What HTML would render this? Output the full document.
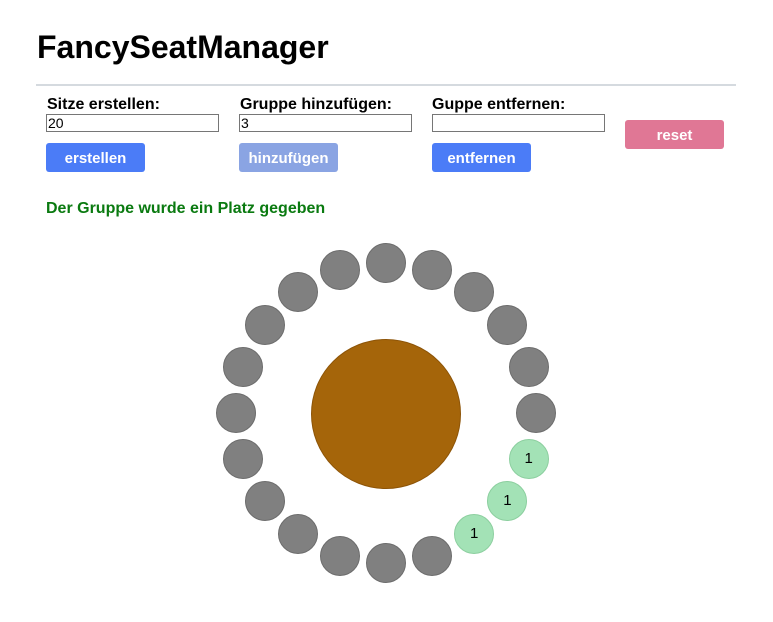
<!DOCTYPE html><html><head><style>
body{margin:0;width:773px;height:622px;background:#fff;font-family:"Liberation Sans",sans-serif;position:relative;overflow:hidden}
.a{position:absolute}
h1{position:absolute;left:37px;top:29px;margin:0;font-size:32px;font-weight:bold}
.hr{left:36px;top:84px;width:700px;height:2px;background:#d5dadf}
.l{font-size:16px;font-weight:bold;top:96px}
.in{top:114px;width:170px;height:16px;border:1px solid #767676;font-size:14px;line-height:16px;padding-left:1px}
.b{height:29px;width:99px;border-radius:3px;color:#fff;font-weight:bold;font-size:15px;text-align:center;line-height:31px}
.s{width:38px;height:38px;border-radius:50%;background:#808080;border:1px solid #6c6c6c;font-size:15px;text-align:center;line-height:38px}
.g{background:#a3e2b6;border-color:#8ccf9f}
</style></head><body>
<h1>FancySeatManager</h1>
<div class="a hr"></div>
<div class="a l" style="left:47px">Sitze erstellen:</div>
<div class="a l" style="left:240px">Gruppe hinzufügen:</div>
<div class="a l" style="left:432px">Guppe entfernen:</div>
<div class="a in" style="left:46px">20</div>
<div class="a in" style="left:239px">3</div>
<div class="a in" style="left:432px"></div>
<div class="a b" style="left:46px;top:143px;background:#4b7cf7">erstellen</div>
<div class="a b" style="left:239px;top:143px;background:#8aa4e3">hinzufügen</div>
<div class="a b" style="left:432px;top:143px;background:#4b7cf7">entfernen</div>
<div class="a b" style="left:625px;top:120px;background:#e07795">reset</div>
<div class="a" style="left:46px;top:200px;color:#0a7a10;font-weight:bold;font-size:16px">Der Gruppe wurde ein Platz gegeben</div>
<div class="a" style="left:311px;top:339px;width:148px;height:148px;border-radius:50%;background:#a5650a;border:1px solid #8d5407"></div>
<div id="r"></div>
<script>
var h='';for(var i=0;i<20;i++){var t=i*18*Math.PI/180;var x=386+150*Math.cos(t),y=413+150*Math.sin(t);var g=(i>=1&&i<=3);h+='<div class="a s'+(g?' g':'')+'" style="left:'+(x-20).toFixed(1)+'px;top:'+(y-20).toFixed(1)+'px">'+(g?'1':'')+'</div>';}document.getElementById('r').innerHTML=h;
</script>
</body></html>
